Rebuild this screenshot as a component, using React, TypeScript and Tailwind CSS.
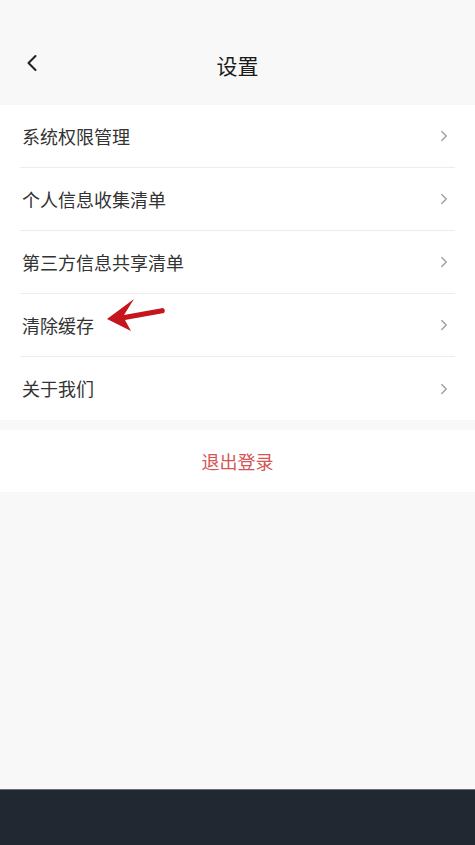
import { ChevronLeft, ChevronRight } from "lucide-react";

const items = ["系统权限管理", "个人信息收集清单", "第三方信息共享清单", "清除缓存", "关于我们"];

function RedArrow() {
    return (
        <svg width="64" height="38" viewBox="0 0 64 38" className="absolute left-[84px] top-[-16px]">
            <path d="M3 23 L30 3 L20 19 L59 12 Q62 14 60 17 L21 24 L27 35 Z" fill="#c4161c" />
        </svg>
    );
}

export default function App() {
    return (
        <div
            className="w-[475px] h-[845px] flex flex-col bg-[#f8f8f8]"
            style={{ fontFamily: '"Noto Sans CJK SC", "Noto Sans", sans-serif' }}
        >
            <header className="h-[105px] shrink-0 relative flex items-center justify-center pt-[26px]">
                <ChevronLeft className="absolute left-[18px] top-[49px] text-[#222]" size={28} strokeWidth={1.8} />
                <h1 className="text-[21px] text-[#1a1a1a]">设置</h1>
            </header>

            <ul className="bg-white">
                {items.map((label, i) => (
                    <li key={label} className="px-5">
                        <div
                            className={`h-[63px] flex items-center justify-between relative ${i < items.length - 1 ? "border-b border-[#ececec]" : ""
                                }`}
                        >
                            <span className="text-[18px] text-[#333] pl-[2px] relative">
                                {label}
                                {label === "清除缓存" && <RedArrow />}
                            </span>
                            <ChevronRight className="text-[#9a9a9a] mr-[2px]" size={18} strokeWidth={1.6} />
                        </div>
                    </li>
                ))}
            </ul>

            <div className="mt-[10px] h-[62px] bg-white flex items-center justify-center">
                <span className="text-[18px] text-[#d65555]">退出登录</span>
            </div>

            <div className="flex-1" />

            <div className="h-[56px] shrink-0 bg-[#222831] border-t border-[#6b6e73]" />
        </div>
    );
}
